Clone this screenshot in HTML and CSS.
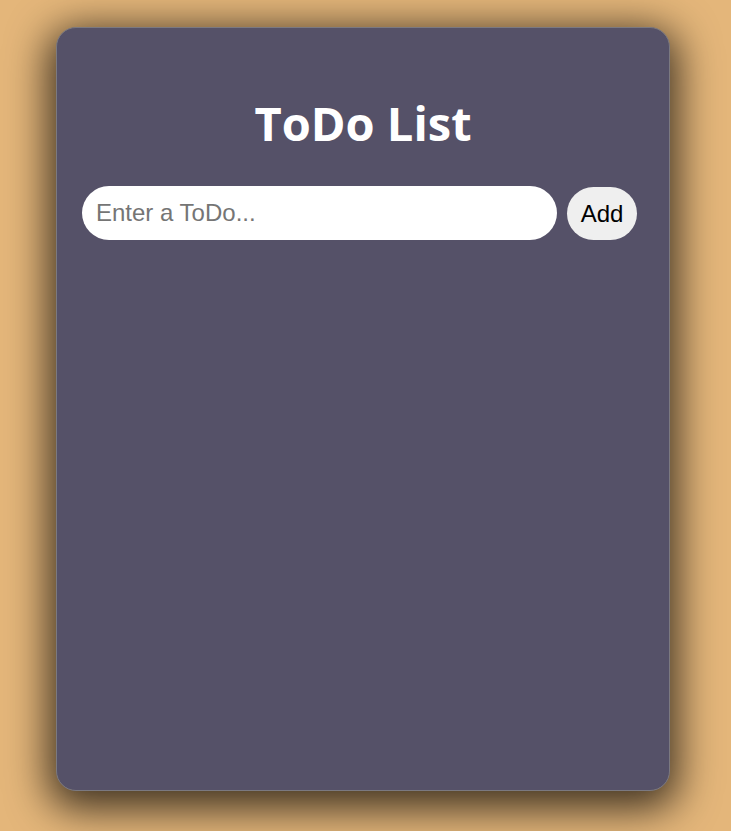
FILE: index.html
```html
<!DOCTYPE html>
<html>
<head>
<meta charset="utf-8">
<link rel="stylesheet" href="styles.css">
</head>
<body>
<div class="card">
  <h1 class="title">ToDo List</h1>
  <form class="form">
    <input class="todo-input" type="text" placeholder="Enter a ToDo...">
    <button class="add-btn" type="button">Add</button>
  </form>
</div>
</body>
</html>
```
FILE: styles.css
```css
html, body {
  margin: 0;
  padding: 0;
}
body {
  background: #e4b67a;
  min-height: 831px;
  padding-top: 27px;
  box-sizing: border-box;
}
.card {
  box-sizing: border-box;
  width: 614px;
  height: 764px;
  margin-left: 56px;
  background: #555168;
  border: 1px solid #7b7980;
  border-radius: 20px;
  box-shadow: 0 10px 40px 8px rgba(0, 0, 0, 0.72);
  padding: 0 32px 0 25px;
}
.title {
  margin: 0;
  padding-top: 65px;
  padding-left: 7px;
  height: 93px;
  text-align: center;
  color: #ffffff;
  font-family: "Open Sans", sans-serif;
  font-weight: 700;
  font-size: 47px;
  line-height: 60px;
}
.form {
  display: flex;
  gap: 10px;
  margin: 0;
  padding: 0;
}
.todo-input {
  flex: 1;
  height: 54px;
  box-sizing: border-box;
  border: none;
  outline: none;
  border-radius: 27px;
  background: #ffffff;
  padding: 0 14px;
  font-family: "Liberation Sans", Arial, sans-serif;
  font-size: 24px;
  color: #222;
}
.todo-input::placeholder {
  color: #757575;
}
.add-btn {
  width: 70px;
  height: 53px;
  margin-top: 1px;
  box-sizing: border-box;
  border: none;
  border-radius: 27px;
  background: #efefef;
  font-family: "Liberation Sans", Arial, sans-serif;
  font-size: 24px;
  color: #000;
  padding: 0;
}
```
